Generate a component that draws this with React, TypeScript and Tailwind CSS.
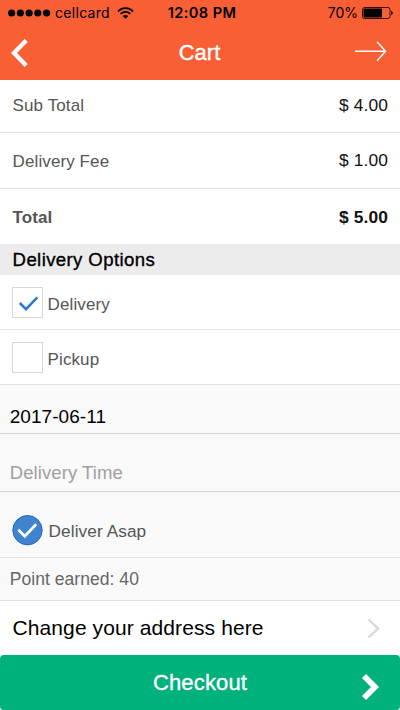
import type { ReactNode } from 'react';

const helvetica = "font-['Liberation_Sans',Arial,sans-serif]";
const medium = '[-webkit-text-stroke:0.35px_currentColor]';

function StatusBar() {
  return (
    <div className="grid h-[26px] grid-cols-[1fr_auto_1fr] items-center pl-2 pr-[7px] font-['Inter',sans-serif] text-[14px] leading-[26px] text-black">
      <div className="flex items-center">
        <svg width="43" height="8" viewBox="0 0 43 8" aria-hidden="true">
          {[3.6, 12.4, 21.1, 29.8, 38.6].map((x) => (
            <circle key={x} cx={x} cy="4" r="3.6" />
          ))}
        </svg>
        <span className="ml-1 tracking-[0.3px]">cellcard</span>
        <svg className="ml-[7px]" width="17" height="12" viewBox="0 0 17 12" fill="none" stroke="black" aria-hidden="true">
          <path d="M1 4.3C5.2 .1 11.8 .1 16 4.3M3.6 6.8C6.4 4.1 10.6 4.1 13.4 6.8" strokeWidth="1.7" />
          <path d="M5.7 9C7.3 7.5 9.7 7.5 11.3 9L8.5 11.7Z" fill="black" stroke="none" />
        </svg>
      </div>
      <span className="ml-[3px] text-[14.6px] font-semibold tracking-[0.4px]">12:08 PM</span>
      <div className="flex items-center justify-end">
        <span>70%</span>
        <svg className="ml-[4px]" width="31" height="12" viewBox="0 0 31 12" aria-hidden="true">
          <rect x=".5" y=".5" width="27.5" height="11" rx="2" fill="none" stroke="black" strokeOpacity=".8" />
          <rect x="1.5" y="1.5" width="18.5" height="9" rx="1" />
          <path d="M29 4C31.3 4.5 31.3 7.5 29 8Z" />
        </svg>
      </div>
    </div>
  );
}

function Header() {
  return (
    <header className="h-20 bg-[#f95f35]">
      <StatusBar />
      <div className="grid h-[54px] grid-cols-[1fr_auto_1fr] items-center pl-[11px] pr-[13px] text-white">
        <svg width="18" height="28" viewBox="0 0 18 28" fill="none" stroke="currentColor" aria-label="Back">
          <path d="M15.2 1.5L3 14L15.2 26.5" strokeWidth="4.4" />
        </svg>
        <h1 className={`ml-px text-[22px] leading-none ${medium}`}>Cart</h1>
        <svg className="mb-[5px] justify-self-end" width="33" height="20" viewBox="0 0 33 20" fill="none" stroke="currentColor" aria-label="Next">
          <path d="M1.5 10.3H31M23.5 1.3L31.5 10.3L23.5 19.3" strokeWidth="1.5" strokeLinecap="round" strokeLinejoin="round" />
        </svg>
      </div>
    </header>
  );
}

function PriceRow({ label, value, className }: { label: string; value: string; className: string }) {
  return (
    <div className={`flex items-center justify-between px-3 text-[17px] ${className}`}>
      <span className="ml-[0.6px] tracking-[0.1px] text-[#555]">{label}</span>
      <span className="pb-[2px] text-[17.4px] tracking-[0.1px] text-[#111]">{value}</span>
    </div>
  );
}

function CheckRow({ label, checked }: { label: string; checked?: boolean }) {
  return (
    <div className="flex h-[55px] items-center border-b border-[#e2e2e2] px-3">
      <span className="mt-px flex size-[31px] items-center justify-center border-[1.5px] border-[#d9d9d9]">
        {checked && (
          <svg className="ml-[2px] mt-[2px]" width="21" height="17" viewBox="0 0 21 17" fill="none" stroke="#2b79d0" aria-hidden="true">
            <path d="M1.8 8L8 14.2L19.3 2.3" strokeWidth="2.5" />
          </svg>
        )}
      </span>
      <span className="ml-[4.6px] pt-[5px] text-[17px] tracking-[0.1px] text-[#555]">{label}</span>
    </div>
  );
}

function Field({ children, className }: { children: ReactNode; className: string }) {
  return <div className={`flex items-end border-b border-[#d7d7d7] px-[9.7px] ${className}`}>{children}</div>;
}

export default function App() {
  return (
    <div className={`flex h-[710px] w-[400px] flex-col overflow-hidden bg-white ${helvetica}`}>
      <Header />
      <PriceRow label="Sub Total" value="$ 4.00" className="h-[53px] border-b border-[#e2e2e2]" />
      <PriceRow label="Delivery Fee" value="$ 1.00" className="h-14 border-b border-[#e2e2e2] pt-[2px]" />
      <PriceRow label="Total" value="$ 5.00" className="h-[55px] pt-[3px] font-bold" />
      <h2 className={`flex h-[31px] items-center bg-[#ececec] pl-[12.6px] pt-px text-[18.6px] tracking-[0.38px] text-black ${medium}`}>Delivery Options</h2>
      <CheckRow label="Delivery" checked />
      <CheckRow label="Pickup" />
      <div className="bg-[#f9f9f9]">
        <Field className="h-[49px] pb-[6px] text-[19px] leading-[21px] tracking-[0.06px] text-black">2017-06-11</Field>
        <Field className="h-[58px] pb-[8px] text-[18.5px] leading-[21px] tracking-[0.09px] text-[#a0a0a0]">Delivery Time</Field>
        <div className="flex h-[66px] items-center border-b border-[#e2e2e2] px-3 pt-[11px]">
          <svg width="31" height="31" viewBox="0 0 31 31" fill="none" aria-hidden="true">
            <circle cx="15.5" cy="15.2" r="14.7" fill="#4084cf" stroke="#216bc0" />
            <path d="M6.3 14.8L12.8 21.2L24.2 9.2" stroke="white" strokeWidth="2.7" />
          </svg>
          <span className="ml-[5.6px] pt-[3px] text-[17.2px] tracking-[0.1px] text-[#555]">Deliver Asap</span>
        </div>
        <div className="flex h-[43px] items-center border-b border-[#e2e2e2] px-[9.7px] text-[17.5px] tracking-[0.05px] text-[#666]">Point earned: 40</div>
      </div>
      <div className="flex h-[54px] items-center justify-between pl-[12.5px] pr-5">
        <span className="text-[21px] tracking-[0.1px] text-black">Change your address here</span>
        <svg width="13" height="20" viewBox="0 0 13 20" fill="none" stroke="#d8d8d8" aria-hidden="true">
          <path d="M1.5 1.5L11 10.5L1.5 19.5" strokeWidth="2.4" />
        </svg>
      </div>
      <button className="grid h-[55px] grid-cols-[1fr_auto_1fr] items-center rounded-[4px] bg-[#00b17b] px-[21px] text-white">
        <span />
        <span className={`pt-px text-[22px] leading-none tracking-[0.15px] ${medium}`}>Checkout</span>
        <svg className="mt-[9px] justify-self-end" width="18" height="28" viewBox="0 0 18 28" fill="none" stroke="currentColor" aria-hidden="true">
          <path d="M3 3L14 14L3 25" strokeWidth="5.8" />
        </svg>
      </button>
    </div>
  );
}
